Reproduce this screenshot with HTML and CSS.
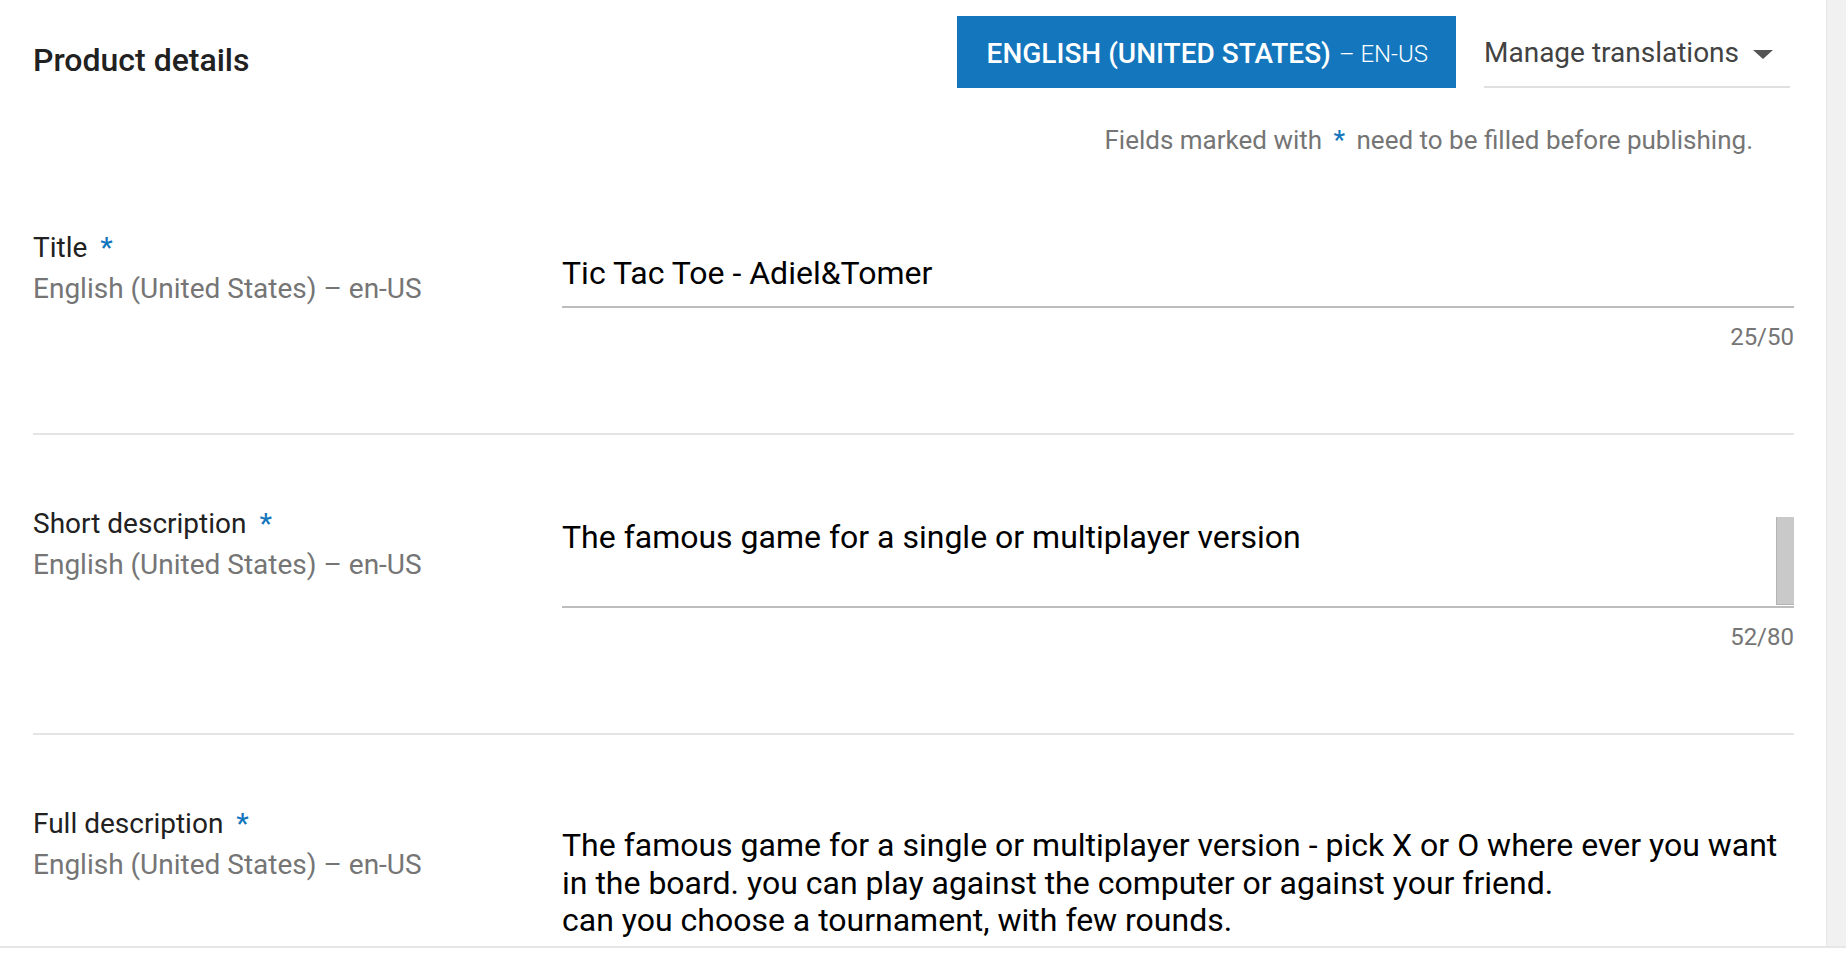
FILE: index.html
```html
<!DOCTYPE html>
<html lang="en">
<head>
<meta charset="utf-8">
<title>Product details</title>
<link rel="stylesheet" href="styles.css">
</head>
<body>
<div class="window">
  <main class="content">
    <header class="header">
      <h1 class="page-title">Product details</h1>
      <div class="lang-btn"><span class="lang-name">ENGLISH (UNITED STATES)</span><span class="lang-code">– EN-US</span></div>
      <div class="manage"><span>Manage translations</span><span class="caret"></span></div>
    </header>
    <p class="notice">Fields marked with <span class="req">*</span> need to be filled before publishing.</p>

    <section class="field">
      <div class="label">
        <div>Title<span class="req">*</span></div>
        <div class="sub">English (United States) – en-US</div>
      </div>
      <div class="control">
        <div class="input">Tic Tac Toe - Adiel&amp;Tomer</div>
        <div class="counter">25/50</div>
      </div>
    </section>

    <section class="field">
      <div class="label">
        <div>Short description<span class="req">*</span></div>
        <div class="sub">English (United States) – en-US</div>
      </div>
      <div class="control">
        <div class="textarea">
          <div class="text">The famous game for a single or multiplayer version</div>
          <div class="thumb"></div>
        </div>
        <div class="counter">52/80</div>
      </div>
    </section>

    <section class="field last">
      <div class="label">
        <div>Full description<span class="req">*</span></div>
        <div class="sub">English (United States) – en-US</div>
      </div>
      <div class="control">
        <div class="long">The famous game for a single or multiplayer version - pick X or O where ever you want<br>in the board. you can play against the computer or against your friend.<br>can you choose a tournament, with few rounds.</div>
      </div>
    </section>
  </main>
  <div class="track"></div>
</div>
<div class="footer"></div>
</body>
</html>
```

FILE: styles.css
```css
* { box-sizing: border-box; }

html, body {
  margin: 0;
  background: #ffffff;
  font-family: Roboto, "Liberation Sans", sans-serif;
}

.window {
  display: flex;
  height: 946px;
  overflow: hidden;
}

.content {
  flex: 1;
  min-width: 0;
  padding: 16px 32px 0 33px;
}

.track {
  width: 20px;
  background: #f1f1f1;
  border-left: 1px solid #e6e6e6;
}

.footer {
  height: 26px;
  border-top: 2px solid #e6e6e6;
}

/* header */
.header {
  display: flex;
  align-items: flex-start;
  padding-right: 4px;
}

.page-title {
  flex: 1;
  margin: 24px 0 0;
  font-size: 32px;
  line-height: 40px;
  font-weight: 500;
  color: #212121;
}

.lang-btn {
  height: 72px;
  padding: 2px 28px 0 30px;
  background: #1477bd;
  color: #ffffff;
  display: flex;
  align-items: center;
  white-space: nowrap;
}

.lang-name {
  font-size: 28px;
  font-weight: 500;
}

.lang-code {
  font-size: 24px;
  font-weight: 300;
  margin-left: 8px;
  margin-top: 2px;
}

.manage {
  margin-left: 28px;
  width: 306px;
  height: 72px;
  padding-top: 3px;
  border-bottom: 2px solid #e0e0e0;
  display: flex;
  align-items: center;
  font-size: 28px;
  color: #424242;
  white-space: nowrap;
}

.caret {
  margin-left: auto;
  margin-right: 17px;
  margin-top: 4px;
  width: 0;
  height: 0;
  border-left: 10.5px solid transparent;
  border-right: 10.5px solid transparent;
  border-top: 9px solid #555555;
}

.notice {
  margin: 36px 0 3px;
  padding-right: 41px;
  text-align: right;
  font-size: 26px;
  line-height: 32px;
  color: #757575;
}

.req {
  color: #1477bd;
  font-weight: 500;
}

.notice .req { margin: 0 5px; }

/* fields */
.field {
  display: grid;
  grid-template-columns: 529px 1fr;
  padding: 68px 0 80px;
  border-bottom: 2px solid #e4e4e4;
}

.field.last { border-bottom: none; }

.label {
  font-size: 28px;
  line-height: 41px;
  color: #212121;
}

.label .req { margin-left: 13px; }

.sub { color: #757575; }

.control { min-width: 0; }

.input {
  margin-top: 26px;
  font-size: 32px;
  line-height: 40px;
  padding-bottom: 13px;
  border-bottom: 2px solid #bdbdbd;
  color: #000000;
}

.counter {
  margin-top: 13px;
  text-align: right;
  font-size: 24px;
  line-height: 32px;
  color: #757575;
}

.textarea {
  margin-top: 14px;
  display: flex;
  height: 91px;
  border-bottom: 2px solid #bdbdbd;
}

.textarea .text {
  flex: 1;
  font-size: 32px;
  line-height: 40px;
  color: #000000;
}

.thumb {
  width: 18px;
  height: 88px;
  background: #c9c9c9;
  border-left: 1px solid #b3b3b3;
  border-bottom: 1px solid #b3b3b3;
}

.long {
  margin-top: 24px;
  font-size: 32px;
  line-height: 37.6px;
  color: #000000;
  white-space: nowrap;
}
```
